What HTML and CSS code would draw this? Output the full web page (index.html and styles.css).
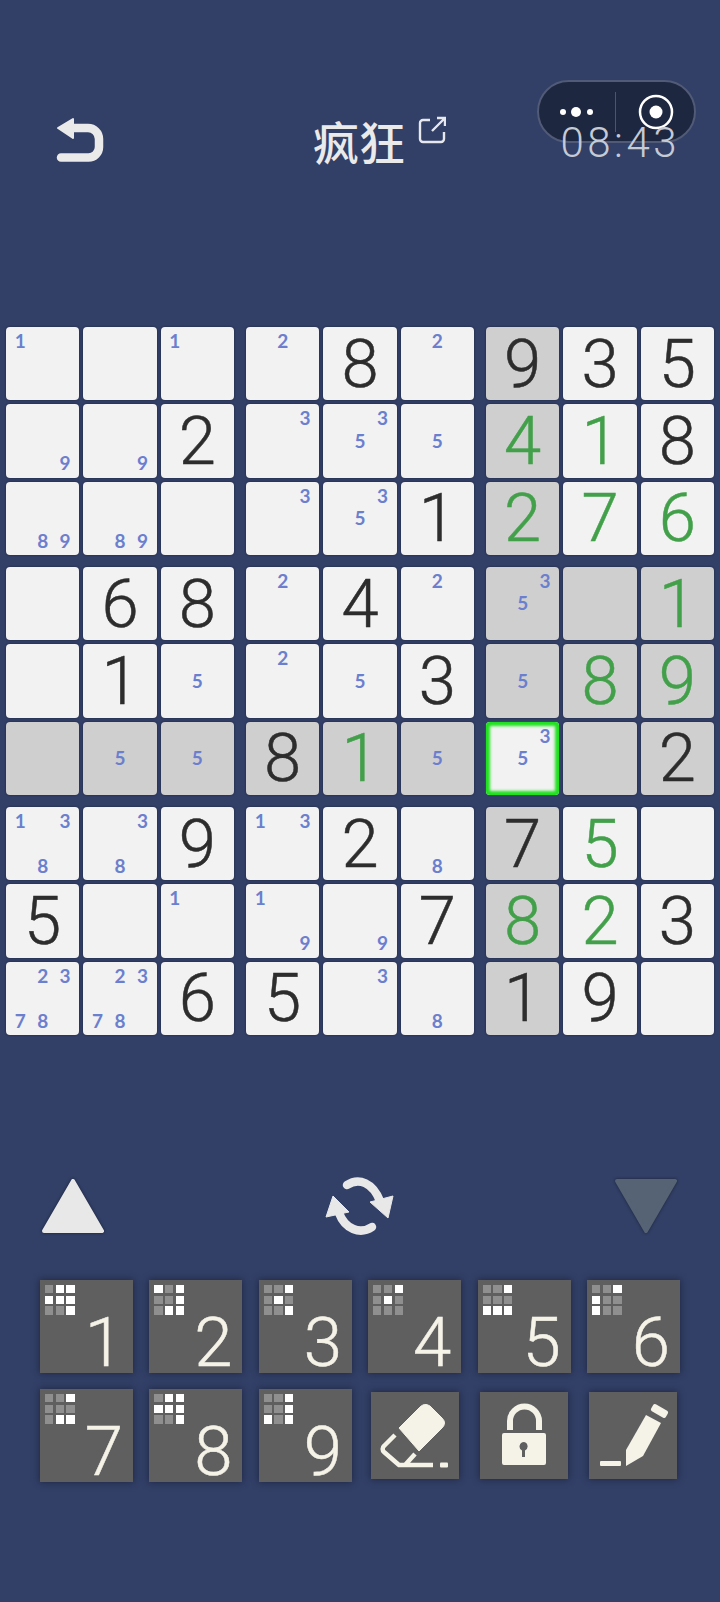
FILE: index.html
```html
<!DOCTYPE html>
<html lang="zh">
<head>
    <meta charset="UTF-8">
    <title>数独</title>
    <link rel="stylesheet" href="styles.css">
</head>
<body>
    <div class="capsule">
        <svg class="capsule-dots" width="34" height="14" viewBox="0 0 34 14"><circle cx="3" cy="7" r="3" fill="#fff"/><circle cx="16" cy="7" r="5" fill="#fff"/><circle cx="30" cy="7" r="3" fill="#fff"/></svg>
        <span class="capsule-line"></span>
        <svg class="capsule-rec" width="36" height="36" viewBox="0 0 36 36"><circle cx="18" cy="18" r="16" fill="none" stroke="#fff" stroke-width="2.5"/><circle cx="18" cy="18" r="6.5" fill="#fff"/></svg>
    </div>

    <header class="top">
        <svg class="back" width="48" height="46" viewBox="0 0 48 46"><path d="M15 11H32a11 11 0 0 1 11 11V30a10.500 10.500 0 0 1-10.500 10.500H5" fill="none" stroke="#eaeaea" stroke-width="8.500" stroke-linecap="round"/><path d="M2 11L17 2V21Z" fill="#eaeaea" stroke="#eaeaea" stroke-width="2" stroke-linejoin="round"/></svg>
        <div class="title">
            <span>疯狂</span>
            <svg class="share" width="28" height="28" viewBox="0 0 28 28"><path d="M12 4H5a3 3 0 0 0-3 3V23a3 3 0 0 0 3 3H23a3 3 0 0 0 3-3V16M14 15L26.500 2.500M19 2H27V10" fill="none" stroke="#e6e8ee" stroke-width="2.400"/></svg>
        </div>
        <div class="timer">08:43</div>
    </header>

    <main class="board">
        <div class="block">
            <div class="cell"><i class="n1">1</i></div>
            <div class="cell"></div>
            <div class="cell"><i class="n1">1</i></div>
            <div class="cell"><i class="n9">9</i></div>
            <div class="cell"><i class="n9">9</i></div>
            <div class="cell num">2</div>
            <div class="cell"><i class="n8">8</i><i class="n9">9</i></div>
            <div class="cell"><i class="n8">8</i><i class="n9">9</i></div>
            <div class="cell"></div>
        </div>
        <div class="block">
            <div class="cell"><i class="n2">2</i></div>
            <div class="cell num">8</div>
            <div class="cell"><i class="n2">2</i></div>
            <div class="cell"><i class="n3">3</i></div>
            <div class="cell"><i class="n3">3</i><i class="n5">5</i></div>
            <div class="cell"><i class="n5">5</i></div>
            <div class="cell"><i class="n3">3</i></div>
            <div class="cell"><i class="n3">3</i><i class="n5">5</i></div>
            <div class="cell num">1</div>
        </div>
        <div class="block">
            <div class="cell num gray">9</div>
            <div class="cell num">3</div>
            <div class="cell num">5</div>
            <div class="cell num gray green">4</div>
            <div class="cell num green">1</div>
            <div class="cell num">8</div>
            <div class="cell num gray green">2</div>
            <div class="cell num green">7</div>
            <div class="cell num green">6</div>
        </div>

        <div class="block">
            <div class="cell"></div>
            <div class="cell num">6</div>
            <div class="cell num">8</div>
            <div class="cell"></div>
            <div class="cell num">1</div>
            <div class="cell"><i class="n5">5</i></div>
            <div class="cell gray"></div>
            <div class="cell gray"><i class="n5">5</i></div>
            <div class="cell gray"><i class="n5">5</i></div>
        </div>
        <div class="block">
            <div class="cell"><i class="n2">2</i></div>
            <div class="cell num">4</div>
            <div class="cell"><i class="n2">2</i></div>
            <div class="cell"><i class="n2">2</i></div>
            <div class="cell"><i class="n5">5</i></div>
            <div class="cell num">3</div>
            <div class="cell num gray">8</div>
            <div class="cell num gray green">1</div>
            <div class="cell gray"><i class="n5">5</i></div>
        </div>
        <div class="block">
            <div class="cell gray"><i class="n3">3</i><i class="n5">5</i></div>
            <div class="cell gray"></div>
            <div class="cell num gray green">1</div>
            <div class="cell gray"><i class="n5">5</i></div>
            <div class="cell num gray green">8</div>
            <div class="cell num gray green">9</div>
            <div class="cell active"><i class="n3">3</i><i class="n5">5</i></div>
            <div class="cell gray"></div>
            <div class="cell num gray">2</div>
        </div>

        <div class="block">
            <div class="cell"><i class="n1">1</i><i class="n3">3</i><i class="n8">8</i></div>
            <div class="cell"><i class="n3">3</i><i class="n8">8</i></div>
            <div class="cell num">9</div>
            <div class="cell num">5</div>
            <div class="cell"></div>
            <div class="cell"><i class="n1">1</i></div>
            <div class="cell"><i class="n2">2</i><i class="n3">3</i><i class="n7">7</i><i class="n8">8</i></div>
            <div class="cell"><i class="n2">2</i><i class="n3">3</i><i class="n7">7</i><i class="n8">8</i></div>
            <div class="cell num">6</div>
        </div>
        <div class="block">
            <div class="cell"><i class="n1">1</i><i class="n3">3</i></div>
            <div class="cell num">2</div>
            <div class="cell"><i class="n8">8</i></div>
            <div class="cell"><i class="n1">1</i><i class="n9">9</i></div>
            <div class="cell"><i class="n9">9</i></div>
            <div class="cell num">7</div>
            <div class="cell num">5</div>
            <div class="cell"><i class="n3">3</i></div>
            <div class="cell"><i class="n8">8</i></div>
        </div>
        <div class="block">
            <div class="cell num gray">7</div>
            <div class="cell num green">5</div>
            <div class="cell"></div>
            <div class="cell num gray green">8</div>
            <div class="cell num green">2</div>
            <div class="cell num">3</div>
            <div class="cell num gray">1</div>
            <div class="cell num">9</div>
            <div class="cell"></div>
        </div>
    </main>

    <div class="arrows">
        <svg class="tri" width="64" height="58" viewBox="0 0 64 58"><path d="M32 4L61 54H3Z" fill="#e8e8e8" stroke="#e8e8e8" stroke-width="4" stroke-linejoin="round"/></svg>
        <svg width="80" height="72" viewBox="0 0 80 72"><path d="M27 15C39 7 53 13 60 31" fill="none" stroke="#e8e8e8" stroke-width="8.500" stroke-linecap="round"/><path d="M52 57C40 65 25 59 19 43" fill="none" stroke="#e8e8e8" stroke-width="8.500" stroke-linecap="round"/><path d="M50 32L73 26L68 48Z" fill="#e8e8e8" stroke="#e8e8e8" stroke-linejoin="round"/><path d="M13 26L29 42L6 47Z" fill="#e8e8e8" stroke="#e8e8e8" stroke-linejoin="round"/></svg>
        <svg class="tri" width="64" height="58" viewBox="0 0 64 58"><path d="M32 54L61 4H3Z" fill="#566375" stroke="#566375" stroke-width="4" stroke-linejoin="round"/></svg>
    </div>

    <div class="keys">
        <div class="key"><div class="mini"><b></b><b class="on"></b><b class="on"></b><b class="on"></b><b class="on"></b><b class="on"></b><b></b><b></b><b class="on"></b></div><span>1</span></div>
        <div class="key"><div class="mini"><b class="on"></b><b></b><b class="on"></b><b></b><b></b><b class="on"></b><b></b><b class="on"></b><b class="on"></b></div><span>2</span></div>
        <div class="key"><div class="mini"><b></b><b></b><b class="on"></b><b></b><b class="on"></b><b></b><b></b><b></b><b class="on"></b></div><span>3</span></div>
        <div class="key"><div class="mini"><b></b><b></b><b class="on"></b><b></b><b class="on"></b><b></b><b></b><b></b><b></b></div><span>4</span></div>
        <div class="key"><div class="mini"><b></b><b></b><b class="on"></b><b></b><b></b><b></b><b class="on"></b><b class="on"></b><b class="on"></b></div><span>5</span></div>
        <div class="key"><div class="mini"><b></b><b></b><b class="on"></b><b class="on"></b><b></b><b></b><b class="on"></b><b></b><b></b></div><span>6</span></div>
        <div class="key"><div class="mini"><b></b><b></b><b class="on"></b><b></b><b></b><b></b><b></b><b class="on"></b><b class="on"></b></div><span>7</span></div>
        <div class="key"><div class="mini"><b></b><b class="on"></b><b class="on"></b><b class="on"></b><b class="on"></b><b class="on"></b><b></b><b></b><b class="on"></b></div><span>8</span></div>
        <div class="key"><div class="mini"><b></b><b></b><b class="on"></b><b></b><b></b><b class="on"></b><b class="on"></b><b></b><b class="on"></b></div><span>9</span></div>
        <div class="key tool">
            <svg width="88" height="88" viewBox="0 0 88 88"><path d="M28 36L48 16Q53 10 59 14L71 26Q76 31 71 36L48 59Z" fill="#f5f2e8" stroke="#f5f2e8" stroke-linejoin="round"/><path d="M24 43L13 54a4 4 0 0 0 0 6L28 73H62M44 62L34 73" fill="none" stroke="#f5f2e8" stroke-width="4.500" stroke-linejoin="round"/><rect x="69" y="70.500" width="8" height="5" rx="1" fill="#f5f2e8"/></svg>
        </div>
        <div class="key tool">
            <svg width="88" height="88" viewBox="0 0 88 88"><path d="M30 38V29a14.500 14.500 0 0 1 29 0V38" fill="none" stroke="#f5f2e8" stroke-width="6"/><path d="M24 41H64a2 2 0 0 1 2 2V71a2 2 0 0 1-2 2H24a2 2 0 0 1-2-2V43a2 2 0 0 1 2-2Z M44 50a4.500 4.500 0 0 0-2 8.500V65h3V58.500a4.500 4.500 0 0 0-1-8.500Z" fill="#f5f2e8" fill-rule="evenodd"/></svg>
        </div>
        <div class="key tool">
            <svg width="88" height="88" viewBox="0 0 88 88"><rect x="62" y="15" width="17" height="8" rx="2" transform="rotate(30 70.500 19)" fill="#f5f2e8"/><path d="M57 23L72 31L54 64L37 74V58Z" fill="#f5f2e8"/><rect x="11" y="69" width="21" height="5" rx="1" fill="#f5f2e8"/></svg>
        </div>
    </div>
</body>
</html>
```

FILE: styles.css
```css
/* page */
* {
    box-sizing: border-box;
}

body {
    margin: 0;
    width: 720px;
    height: 1602px;
    overflow: hidden;
    position: relative;
    background-color: #323f66;
    font-family: "Roboto", "Liberation Sans", sans-serif;
}

/* wechat capsule */
.capsule {
    position: absolute;
    left: 537px;
    top: 80px;
    width: 159px;
    height: 63px;
    display: flex;
    align-items: center;
    background-color: #1e2740;
    border: 2px solid #515a76;
    border-radius: 32px;
}

.capsule-dots {
    margin-left: 21px;
}

.capsule-line {
    width: 1px;
    height: 40px;
    margin-left: 21px;
    background-color: #4c5570;
}

.capsule-rec {
    margin-left: 22px;
}

/* header */
.top {
    position: relative;
    height: 327px;
    padding: 117px 40px 0 56px;
    display: flex;
    align-items: flex-start;
}

.title {
    display: flex;
    align-items: flex-start;
    margin-left: 209px;
    margin-top: -3px;
    color: #eaeaea;
    font-family: "Noto Sans CJK SC", sans-serif;
    font-size: 46px;
    font-weight: 500;
    line-height: 52px;
}

.share {
    margin-left: 13px;
    margin-top: 2px;
}

.timer {
    margin-left: auto;
    margin-top: 4px;
    color: #c6cad4;
    font-size: 42px;
    font-weight: 300;
    line-height: 44px;
    letter-spacing: 3.500px;
}

/* board */
.board {
    display: grid;
    grid-template-columns: repeat(3, 228px);
    gap: 12px;
    margin-left: 6px;
}

.block {
    display: grid;
    grid-template-columns: repeat(3, 73.333px);
    grid-auto-rows: 73.333px;
    gap: 4px;
}

.cell {
    display: grid;
    grid-template-columns: repeat(3, 1fr);
    grid-template-rows: repeat(3, 1fr);
    padding: 3px;
    background-color: #f2f2f2;
    border-radius: 4px;
    box-shadow: 0 0 2px #1a2238;
    color: #2d2d2d;
    font-size: 67px;
    font-weight: 300;
    text-align: center;
}

.cell.num {
    display: flex;
    align-items: center;
    justify-content: center;
    -webkit-text-stroke: 0.5px currentColor;
}

.cell.gray {
    background-color: #cfcfcf;
}

.cell.green {
    color: #43a04a;
}

.cell.active {
    box-shadow: inset 0 0 3px 4px #1fe01f, 0 0 1px #1fe01f;
}

.cell i {
    color: #6b7fcf;
    font-family: "Lato", sans-serif;
    font-size: 19px;
    font-style: normal;
    font-weight: 700;
    line-height: 22px;
}

.n1 { grid-area: 1 / 1; }
.n2 { grid-area: 1 / 2; }
.n3 { grid-area: 1 / 3; }
.n5 { grid-area: 2 / 2; }
.n7 { grid-area: 3 / 1; }
.n8 { grid-area: 3 / 2; }
.n9 { grid-area: 3 / 3; }

/* arrows */
.arrows {
    display: flex;
    justify-content: space-between;
    align-items: center;
    margin-top: 135px;
    padding: 0 42px 0 41px;
}

.tri {
    filter: drop-shadow(0 0 1.5px #1a2238);
}

/* number keys */
.keys {
    display: grid;
    grid-template-columns: repeat(6, 93px);
    grid-auto-rows: 93px;
    gap: 16px 16.400px;
    margin-top: 38px;
    margin-left: 40px;
}

.key {
    position: relative;
    background-color: #5f5f5f;
    box-shadow: 0 0 7px #1d2540;
    color: #f5f2e8;
    font-size: 69px;
    font-weight: 300;
    line-height: 66px;
    -webkit-text-stroke: 0.5px currentColor;
}

.key span {
    position: absolute;
    right: 9px;
    bottom: -3px;
    width: 40px;
    text-align: center;
}

.key.tool {
    width: 88px;
    height: 87px;
    margin-top: 3px;
    justify-self: center;
    align-self: start;
}

.mini {
    display: grid;
    grid-template-columns: repeat(3, 8.300px);
    gap: 2.400px;
    padding: 5px;
}

.mini b {
    height: 8.300px;
    background-color: #8f8f8f;
}

.mini b.on {
    background-color: #fff;
}
```
